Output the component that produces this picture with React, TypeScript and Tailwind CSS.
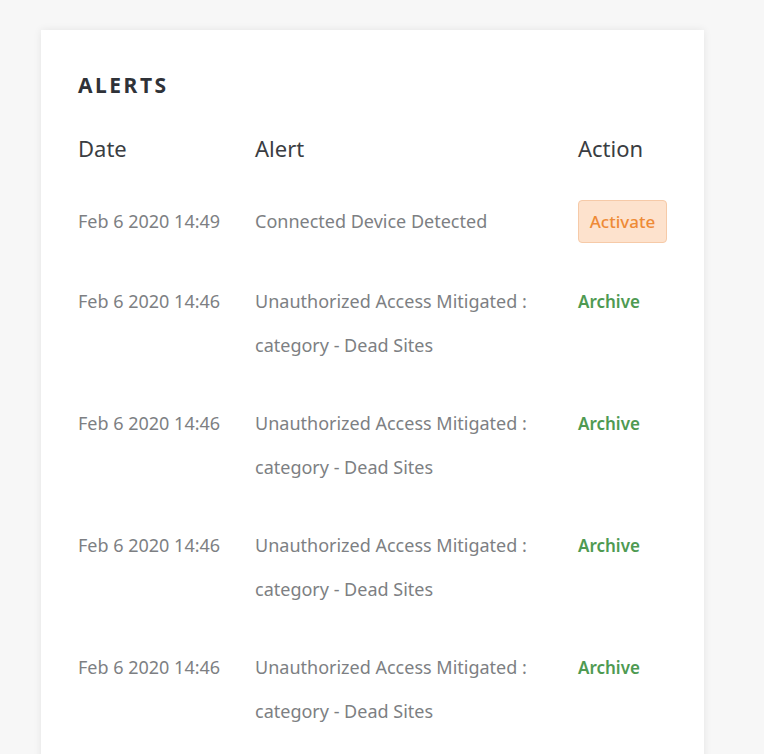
const alerts = [
  { date: "Feb 6 2020 14:49", text: ["Connected Device Detected"], action: "activate" },
  { date: "Feb 6 2020 14:46", text: ["Unauthorized Access Mitigated :", "category - Dead Sites"], action: "archive" },
  { date: "Feb 6 2020 14:46", text: ["Unauthorized Access Mitigated :", "category - Dead Sites"], action: "archive" },
  { date: "Feb 6 2020 14:46", text: ["Unauthorized Access Mitigated :", "category - Dead Sites"], action: "archive" },
  { date: "Feb 6 2020 14:46", text: ["Unauthorized Access Mitigated :", "category - Dead Sites"], action: "archive" },
];

export default function App() {
  return (
    <div className="h-[754px] overflow-hidden bg-[#f7f7f7] pt-[30px] pl-[41px] font-['Noto_Sans',sans-serif]">
      <div className="w-[663px] h-[760px] bg-white shadow-[0_0_8px_rgba(0,0,0,0.08)] pl-[37px] pt-[38px]">
        <h2 className="text-[21px] font-bold tracking-[0.12em] text-[#2f3238] leading-[34px]">ALERTS</h2>
        <table className="mt-[31px] border-collapse">
          <thead>
            <tr className="text-[22px] text-[#3a3d42] text-left">
              <th className="font-normal w-[177px] p-0 pb-[36px] leading-[30px]">Date</th>
              <th className="font-normal w-[323px] p-0 pb-[36px] leading-[30px]">Alert</th>
              <th className="font-normal w-[89px] p-0 pb-[36px] leading-[30px]">Action</th>
            </tr>
          </thead>
          <tbody>
            {alerts.map((a, i) => (
              <tr key={i} className="align-top text-[18px] text-[#7d7f83]">
                <td className={`p-0 leading-[44px] ${i === 0 ? "pb-[36px]" : "pb-[34px]"}`}>{a.date}</td>
                <td className={`p-0 leading-[44px] ${i === 0 ? "pb-[36px]" : "pb-[34px]"}`}>
                  {a.text.map((t, j) => (
                    <div key={j}>{t}</div>
                  ))}
                </td>
                <td className={`p-0 leading-[44px] ${i === 0 ? "pb-[36px]" : "pb-[34px]"}`}>
                  {a.action === "activate" ? (
                    <div className="flex items-center h-[44px]">
                      <span className="flex h-[43px] w-[89px] items-center justify-center rounded-[4px] border border-[#f6caa8] bg-[#fde2cd] text-[17px] font-medium text-[#ee8a36] leading-none">
                        Activate
                      </span>
                    </div>
                  ) : (
                    <span className="text-[17px] font-semibold text-[#4e9a52]">Archive</span>
                  )}
                </td>
              </tr>
            ))}
          </tbody>
        </table>
      </div>
    </div>
  );
}
